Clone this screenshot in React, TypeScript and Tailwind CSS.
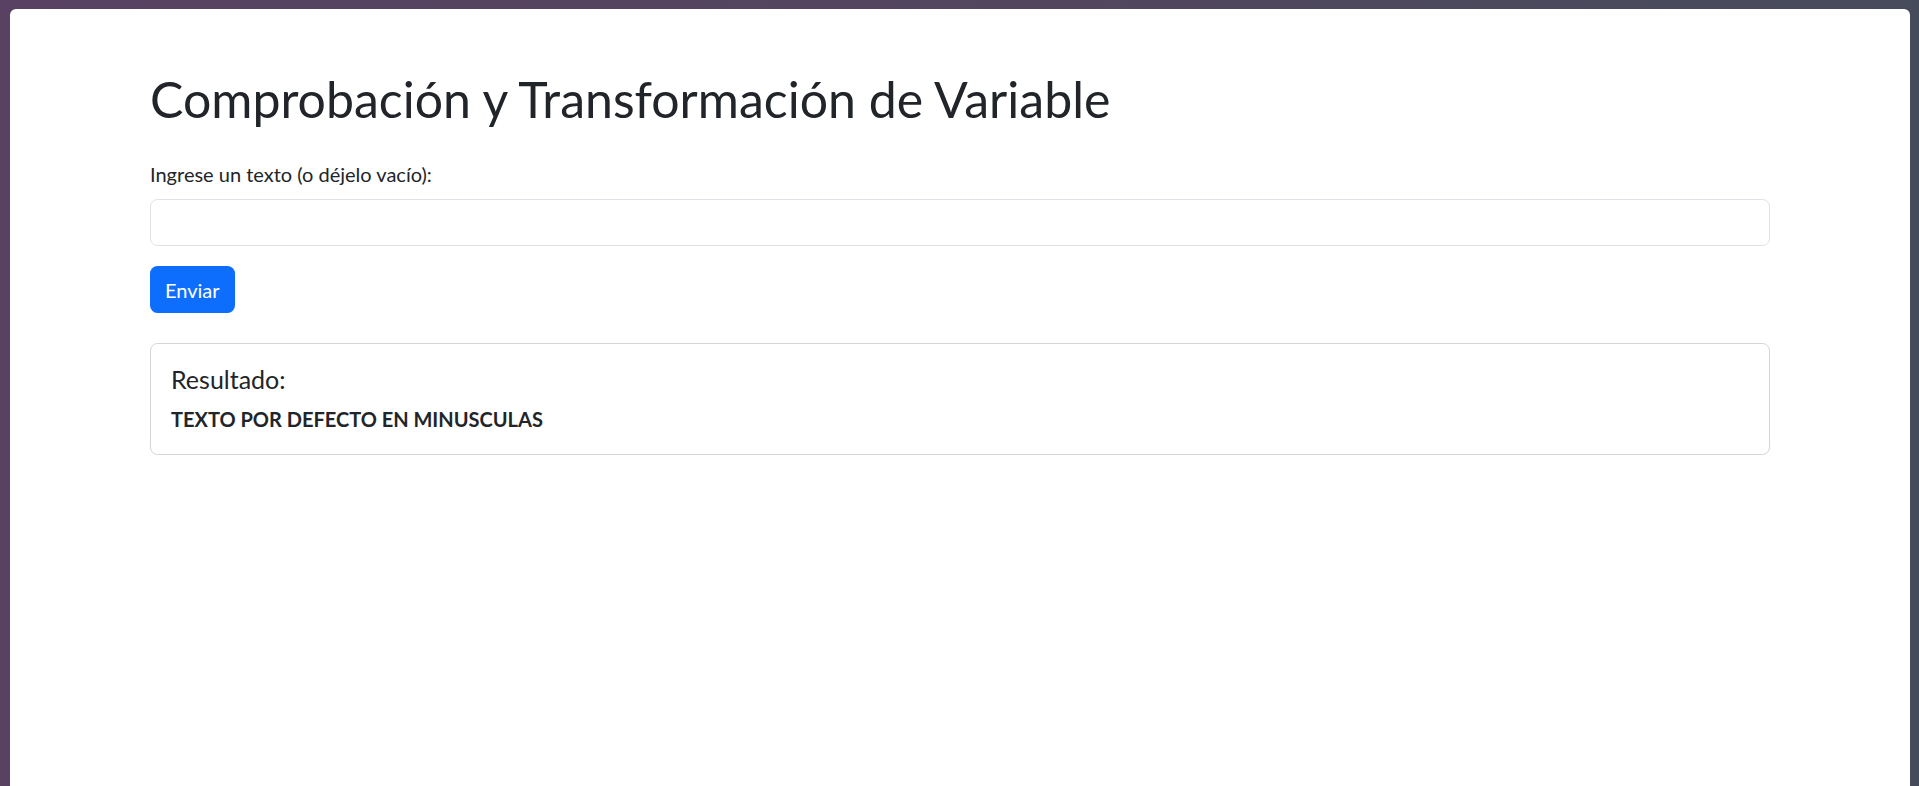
import React from 'react';

export default function App() {
  return (
    <div className="h-screen overflow-hidden bg-linear-to-r from-[#584163] via-[#53465f] to-[#464b5b] pl-[10px] pr-[9px] pt-[9px]">
      <div className="h-full rounded-t-[6px] bg-white">
        <div className="mx-auto max-w-[1650px] px-[15px] pt-[60px] font-['Lato',sans-serif] text-[#212529]">
          <h1 className="mb-[30px] text-[50px] leading-[60px] font-normal">
            Comprobación y Transformación de Variable
          </h1>

          <form onSubmit={(e) => e.preventDefault()}>
            <label htmlFor="texto" className="mb-[10px] block text-[20px] leading-[30px]">
              Ingrese un texto (o déjelo vacío):
            </label>
            <input
              id="texto"
              type="text"
              className="block h-[47px] w-full rounded-[7.5px] border border-[#dee2e6] px-[15px] text-[20px]"
            />
            <button
              type="submit"
              className="mt-[20px] h-[47px] rounded-[7.5px] bg-[#0d6efd] px-[15px] text-[20px] text-white"
            >
              Enviar
            </button>
          </form>

          <div className="mt-[30px] rounded-[7.5px] border border-[#d3d4d5] p-[20px]">
            <h5 className="mb-[10px] text-[25px] leading-[30px] font-normal">Resultado:</h5>
            <p className="text-[20px] leading-[30px] font-bold">TEXTO POR DEFECTO EN MINUSCULAS</p>
          </div>
        </div>
      </div>
    </div>
  );
}
